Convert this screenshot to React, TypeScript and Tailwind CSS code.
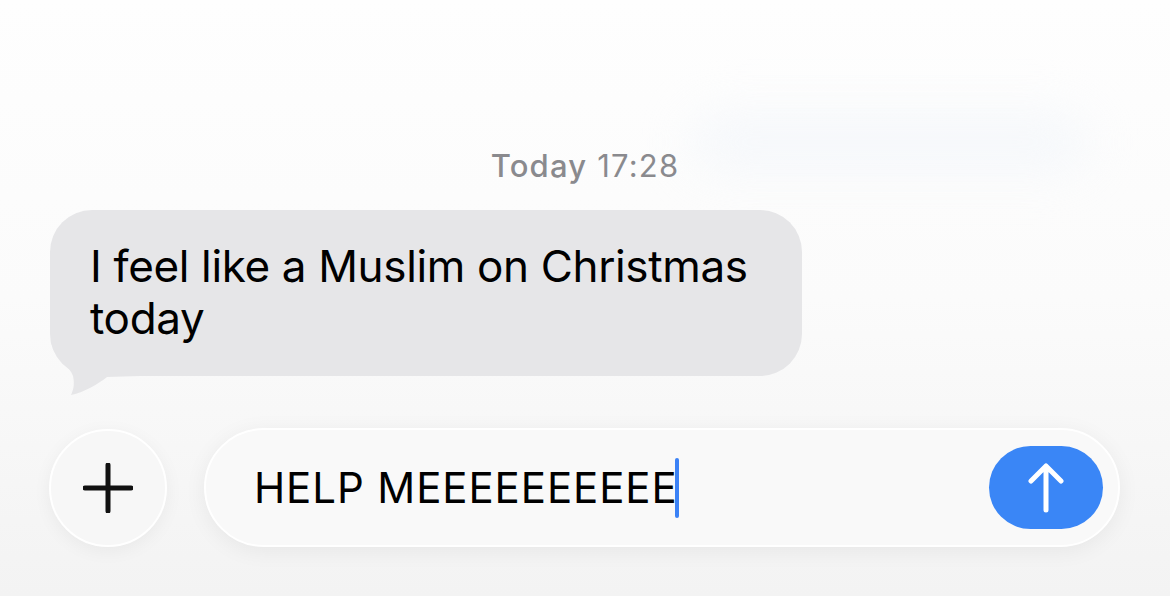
import React from "react";

export default function App() {
  return (
    <div
      className="relative w-[1170px] h-[596px] overflow-hidden bg-gradient-to-b from-[#fefefe] via-[#fbfbfb] to-[#f3f3f3]"
      style={{ fontFamily: "Inter, 'Noto Sans', sans-serif" }}
    >
      <div className="absolute left-[690px] top-[112px] w-[400px] h-[60px] rounded-full bg-[#f1f5fa] blur-xl opacity-60" />
      <div className="relative flex flex-col pt-[148px]">
        <div className="text-center text-[31px] leading-[36px] tracking-[1.2px] text-[#8a8a8e]">
          <span className="font-medium">Today</span> <span>17:28</span>
        </div>

        <div className="relative ml-[50px] mt-[26px] w-[752px]">
          <div className="relative z-10 rounded-[42px] bg-[#e6e6e8] pl-[40px] pr-[30px] pt-[30px] pb-[32px] text-[44px] leading-[52px] text-black tracking-[-0.35px]">
            I feel like a Muslim on Christmas today
          </div>
          <svg
            className="absolute left-0 top-[120px] z-0"
            width="90"
            height="80"
            viewBox="0 0 90 80"
          >
            <path
              d="M1,0 L1,12 C4,27 20,36 23,46 C25,55 23,61 21,65 C35,62 48,54 57,47 L90,46 L90,0 Z"
              fill="#e6e6e8"
            />
          </svg>
        </div>

        <div className="mt-[52px] flex items-center pl-[49px]">
          <div className="flex h-[118px] w-[118px] items-center justify-center rounded-full border-2 border-white bg-[#f7f7f7] shadow-[0_4px_18px_rgba(0,0,0,0.05)]">
            <svg width="50" height="50" viewBox="0 0 50 50">
              <path
                d="M25 2 V48 M2 25 H48"
                stroke="#111"
                strokeWidth="5"
                strokeLinecap="round"
              />
            </svg>
          </div>
          <div className="ml-[37px] flex h-[119px] w-[916px] items-center rounded-full border-2 border-white bg-[#f9f9f9] pl-[48px] pr-[15px] shadow-[0_4px_22px_rgba(0,0,0,0.06)]">
            <span className="text-[42px] leading-[50px] text-black tracking-[0.9px]">
              HELP MEEEEEEEEEE
            </span>
            <span className="-ml-[3px] h-[60px] w-[4px] rounded-full bg-[#3b82f6]" />
            <div className="ml-auto flex h-[83px] w-[114px] items-center justify-center rounded-full bg-[#3a86f6]">
              <svg width="40" height="52" viewBox="0 0 40 52">
                <path
                  d="M20 4 V48 M5 19 L20 4 L35 19"
                  stroke="#fff"
                  strokeWidth="5"
                  strokeLinecap="round"
                  strokeLinejoin="round"
                  fill="none"
                />
              </svg>
            </div>
          </div>
        </div>
      </div>
    </div>
  );
}
